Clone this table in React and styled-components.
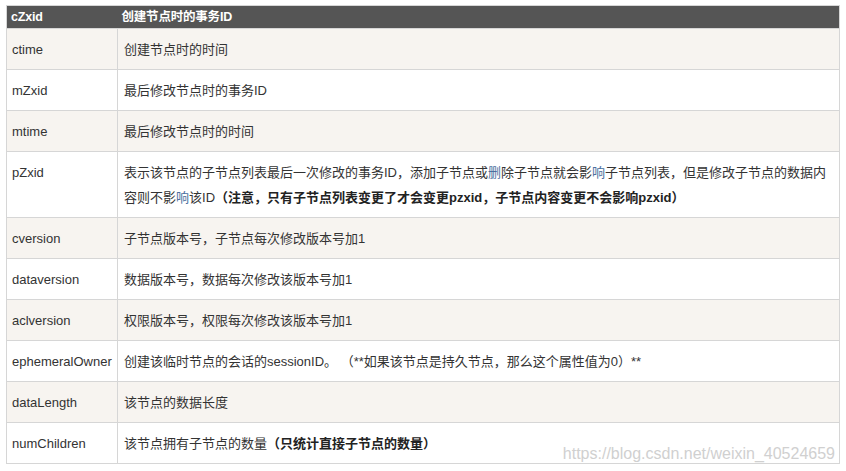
import React from "react";
import styled, { createGlobalStyle } from "styled-components";

const Global = createGlobalStyle`
  html, body { margin: 0; padding: 0; background: #fff; }
  body { font-family: "Liberation Sans", Arial, "Noto Sans CJK SC", sans-serif; }
`;

const Page = styled.div`
  position: relative;
  padding: 5px 6px 0 6px;
  width: 834px;
  height: 466px;
`;

const Table = styled.table`
  width: 834px;
  border-collapse: collapse;
  border: 1px solid #d6d6d6;
  table-layout: fixed;
  font-size: 13px;
  color: #333;
`;

const HeadCell = styled.th`
  background: #555555;
  color: #fff;
  font-weight: bold;
  font-size: 12.5px;
  text-align: left;
  height: 23px;
  padding: 0 4px;
  line-height: 20px;
  vertical-align: middle;
  width: ${(p) => p.$w || "auto"};
  letter-spacing: -0.2px;
  box-sizing: border-box;
`;

const Row = styled.tr`
  background: ${(p) => (p.$odd ? "#f7f4f0" : "#ffffff")};
  border-top: 1px solid #d6d6d6;
`;

const Cell = styled.td`
  padding: 8px 6px 7px 6px;
  line-height: 25px;
  vertical-align: top;
  border-left: 1px solid #d6d6d6;
  &:first-child { border-left: none; padding-left: 5px; }
`;

const Strong = styled.b`
  font-weight: bold;
  color: #222;
`;

const Tint = styled.span`
  color: #4a6f9e;
`;

const Watermark = styled.div`
  position: absolute;
  right: 11px;
  bottom: 8px;
  font-size: 16px;
  color: #d0d0d0;
  font-family: "Liberation Sans", Arial, sans-serif;
`;

const rows = [
  ["ctime", "创建节点时的时间"],
  ["mZxid", "最后修改节点时的事务ID"],
  ["mtime", "最后修改节点时的时间"],
  [
    "pZxid",
    <>
      表示该节点的子节点列表最后一次修改的事务ID，添加子节点或<Tint>删</Tint>除子节点就会影<Tint>响</Tint>子节点列表，但是修改子节点的数据内
      <br />
      容则不影<Tint>响</Tint>该ID<Strong>（注意，只有子节点列表变更了才会变更pzxid，子节点内容变更不会影响pzxid）</Strong>
    </>,
  ],
  ["cversion", "子节点版本号，子节点每次修改版本号加1"],
  ["dataversion", "数据版本号，数据每次修改该版本号加1"],
  ["aclversion", "权限版本号，权限每次修改该版本号加1"],
  ["ephemeralOwner", "创建该临时节点的会话的sessionID。 （**如果该节点是持久节点，那么这个属性值为0）**"],
  ["dataLength", "该节点的数据长度"],
  [
    "numChildren",
    <>
      该节点拥有子节点的数量<Strong>（只统计直接子节点的数量）</Strong>
    </>,
  ],
];

export default function App() {
  return (
    <>
      <Global />
      <Page>
        <Table>
          <thead>
            <tr>
              <HeadCell $w="111px">cZxid</HeadCell>
              <HeadCell>创建节点时的事务ID</HeadCell>
            </tr>
          </thead>
          <tbody>
            {rows.map(([k, v], i) => (
              <Row key={k} $odd={i % 2 === 0}>
                <Cell>{k}</Cell>
                <Cell>{v}</Cell>
              </Row>
            ))}
          </tbody>
        </Table>
        <Watermark>https://blog.csdn.net/weixin_40524659</Watermark>
      </Page>
    </>
  );
}
